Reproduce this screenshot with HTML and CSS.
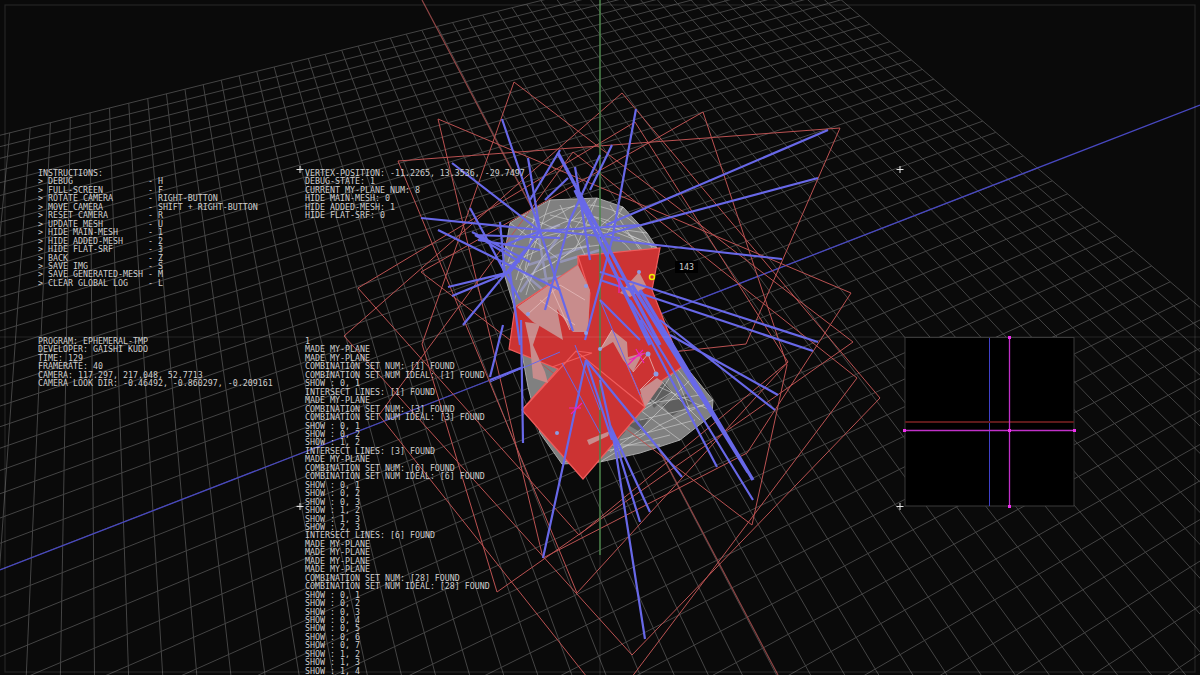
FILE: index.html
```html
<!DOCTYPE html>
<html>
<head>
  <title>EPHEMERAL-TMP</title>
  <link rel="stylesheet" href="styles.css">
</head>
<body>
  <div class="stage">
    <svg class="scene" width="1200" height="675" viewBox="0 0 1200 675">
      <!-- ground grid is filled in by script.js -->
      <g id="grid" class="grid"></g>

      <!-- axes -->
      <line class="axis-red" x1="422" y1="0" x2="778" y2="675"/>
      <line class="axis-blue" x1="0" y1="570" x2="1200" y2="105"/>

      <!-- mesh -->
      <path class="mesh" d="M502,267 510,223 523,215 550,200 597,198 623,207 647,233 657,248 650,290 668,345 690,372 713,400 712,415 680,440 640,453 600,462 562,464 540,433 528,387 513,303Z"/>
      <path class="mesh-dark" d="M648,398 665,382 672,392 654,408ZM662,405 686,394 694,402 672,416ZM628,425 650,416 640,432ZM604,440 626,431 612,447Z"/>
      <path class="mesh-pale" d="M515,240 560,225M510,262 555,300M520,292 560,235M535,215 548,290M560,262 600,250M528,265 590,245M540,280 600,270"/>
      <path class="mesh-wire" d="M510,223 560,260 623,207M523,215 570,235 597,198M550,200 530,260 513,303M597,198 575,250 540,270M623,207 600,245 560,250M647,233 590,225 530,240M657,248 610,230 550,215M502,267 550,245 590,200M580,205 610,250M560,205 585,255M535,212 525,270M540,225 575,205M505,245 535,290M520,280 555,262M610,205 640,250M590,215 640,240M628,235 655,245
        M508,262 Q520,208 590,205 Q635,210 652,248M516,280 Q530,222 592,216 Q625,222 642,250M526,295 Q540,235 595,230 Q620,235 632,252
        M672,392 640,412 600,440 562,464M713,400 660,425 600,462M690,380 640,430 610,452M700,395 640,405 590,450M680,362 655,400 620,420M665,350 690,410M655,385 710,410M640,410 680,440M600,445 660,445M548,440 590,462M535,420 570,455M675,370 640,385M640,420 705,405M620,440 695,420M590,455 670,435M655,375 700,420M670,360 712,412M645,395 690,430"/>

      <!-- planes -->
      <g class="planes">
        <polygon points="438,119 851,293 747,453 543,558"/>
        <polygon points="514,82 853,342 497,592 422,344"/>
        <polygon points="344,336 622,93 880,398 632,655"/>
        <polygon points="379,415 573,152 857,378 610,706"/>
        <polygon points="358,288 635,122 788,362 579,535"/>
        <polygon points="421,272 703,112 787,365 752,525"/>
        <polyline points="672,352 746,344 840,128 398,161 577,593 788,362"/>
      </g>

      <!-- flat surfaces -->
      <polygon class="flat" points="515,307 578,265 578,256 660,248 652,290 682,367 640,395 645,407 583,479 522,410 558,369 509,349"/>
      <path class="flat-edge" d="M522,410 576,351 645,407M576,351 592,353 552,367M578,256 590,293 587,330M612,330 640,395"/>
      <g class="pink">
        <polygon points="517,307 578,265 590,290 588,332 573,332 557,309 563,340 533,322"/>
        <polygon points="525,322 540,324 533,345 545,372 548,383 533,378 530,345"/>
        <polygon points="612,330 627,342 628,357 643,353 633,372 623,360 613,342 600,350"/>
        <polygon points="657,378 640,390 645,407 663,382"/>
        <polygon points="639,272 647,287 630,297 620,293"/>
        <polygon points="587,440 610,431 608,436 589,445"/>
      </g>
      <path class="pink-wire" d="M528,314 560,285 585,300M540,300 575,325M550,285 570,330M612,330 600,350M648,354 656,374M656,374 640,390M633,372 648,354"/>

      <!-- axis over the mesh -->
      <line class="axis-green" x1="600" y1="0" x2="600" y2="555"/>

      <!-- my-plane normals -->
      <g class="normals">
        <path d="M502,119 540,231M452,163 540,231M528,158 540,231M421,218 620,238M540,231 573,331M540,231 640,225M540,231 510,272M540,231 505,245"/>
        <path d="M448,287 510,272M452,296 510,272M463,325 525,250M470,208 520,300M438,230 560,290M475,235 560,238M475,235 520,262M510,272 530,245M510,272 520,345M500,222 505,275M478,240 540,250M472,232 530,262"/>
        <path d="M575,167 580,198 590,260M636,109 612,240 585,340M612,145 590,190M530,200 560,150M545,200 568,178M600,155 570,220 545,310"/>
        <path d="M828,130 606,225M818,178 604,235M782,259 612,240M818,342 600,272M813,351 600,280"/>
        <path d="M753,500 630,300M717,467 640,320M682,477 586,360M775,410 660,320M778,395 670,335M640,340 600,300"/>
        <path d="M645,639 615,447 600,380M640,522 612,430M650,512 610,425M543,558 586,360M523,443 521,320M490,377 503,325M490,380 523,367M586,360 612,440"/>
        <path class="thick" d="M558,153 660,345M753,480 640,290M748,472 632,285M575,190 650,345"/>
        <path class="thin" d="M562,363 600,433M600,300 640,395M490,382 560,352M575,345 600,410"/>
      </g>

      <!-- dots and markers -->
      <g class="dots">
        <circle cx="648" cy="354" r="2.5"/>
        <circle cx="656" cy="374" r="2.5"/>
        <circle cx="557" cy="433" r="2"/>
        <circle cx="586" cy="333" r="2"/>
        <circle cx="600" cy="349" r="2"/>
        <circle cx="528" cy="314" r="2"/>
        <circle cx="586" cy="286" r="2"/>
        <circle cx="639" cy="272" r="2"/>
      </g>
      <path class="magenta" d="M569,408 581,408M571,414 582,403M629,360 645,353M628,365 643,350M636,349 644,363M619,278 619,293"/>
      <circle class="marker" cx="652" cy="277" r="2.5"/>

      <!-- screen frame and centre lines -->
      <g class="frame">
        <rect x="5" y="5" width="1190" height="667"/>
        <line x1="0" y1="337" x2="1200" y2="337"/>
        <line x1="600" y1="0" x2="600" y2="675"/>
      </g>

      <!-- inset view -->
      <rect class="inset" x="905" y="337.5" width="169" height="168.5"/>
      <line class="inset-blue" x1="989.5" y1="338" x2="989.5" y2="506"/>
      <line class="inset-red" x1="905" y1="422" x2="1074" y2="422"/>
      <line class="inset-magenta" x1="1009.5" y1="338" x2="1009.5" y2="506"/>
      <line class="inset-magenta" x1="905" y1="430.5" x2="1074" y2="430.5"/>
      <path class="inset-dots" d="M1008,336h3v3h-3zM1008,505h3v3h-3zM903,429h3v3h-3zM1073,429h3v3h-3zM1008,429h3v3h-3z"/>

      <!-- corner crosses -->
      <path class="cross" d="M296.500,169.500h7M300,166v7M896.500,169.500h7M900,166v7M296.500,506.500h7M300,503v7M896.500,506.500h7M900,503v7"/>
    </svg>

    <pre class="hud hud-keys">INSTRUCTIONS:
&gt; DEBUG               - H
&gt; FULL-SCREEN         - F
&gt; ROTATE CAMERA       - RIGHT-BUTTON
&gt; MOVE CAMERA         - SHIFT + RIGHT-BUTTON
&gt; RESET CAMERA        - R
&gt; UPDATE MESH         - U
&gt; HIDE MAIN-MESH      - 1
&gt; HIDE ADDED-MESH     - 2
&gt; HIDE FLAT-SRF       - 3
&gt; BACK                - Z
&gt; SAVE IMG            - S
&gt; SAVE GENERATED-MESH - M
&gt; CLEAR GLOBAL LOG    - L</pre>

    <pre class="hud hud-program">PROGRAM: EPHEMERAL-TMP
DEVELOPER: GAISHI KUDO
TIME: 129
FRAMERATE: 40
CAMERA: 117.297, 217.048, 52.7713
CAMERA LOOK DIR: -0.46492, -0.860297, -0.209161</pre>

    <pre class="hud hud-state">VERTEX-POSITION: -11.2265, 13.3536, -29.7497
DEBUG-STATE: 1
CURRENT MY-PLANE NUM: 8
HIDE MAIN-MESH: 0
HIDE ADDED-MESH: 1
HIDE FLAT-SRF: 0</pre>

    <pre class="hud hud-log">1
MADE MY-PLANE
MADE MY-PLANE
COMBINATION SET NUM: [1] FOUND
COMBINATION SET NUM IDEAL: [1] FOUND
SHOW : 0, 1
INTERSECT LINES: [1] FOUND
MADE MY-PLANE
COMBINATION SET NUM: [3] FOUND
COMBINATION SET NUM IDEAL: [3] FOUND
SHOW : 0, 1
SHOW : 0, 2
SHOW : 1, 2
INTERSECT LINES: [3] FOUND
MADE MY-PLANE
COMBINATION SET NUM: [6] FOUND
COMBINATION SET NUM IDEAL: [6] FOUND
SHOW : 0, 1
SHOW : 0, 2
SHOW : 0, 3
SHOW : 1, 2
SHOW : 1, 3
SHOW : 2, 3
INTERSECT LINES: [6] FOUND
MADE MY-PLANE
MADE MY-PLANE
MADE MY-PLANE
MADE MY-PLANE
COMBINATION SET NUM: [28] FOUND
COMBINATION SET NUM IDEAL: [28] FOUND
SHOW : 0, 1
SHOW : 0, 2
SHOW : 0, 3
SHOW : 0, 4
SHOW : 0, 5
SHOW : 0, 6
SHOW : 0, 7
SHOW : 1, 2
SHOW : 1, 3
SHOW : 1, 4</pre>

    <div class="hud tag">143</div>
  </div>

  <script src="script.js"></script>
</body>
</html>
```

FILE: styles.css
```css
body {
  margin: 0;
  background-color: #0a0a0a;
}

.stage {
  position: relative;
  width: 1200px;
  height: 675px;
  overflow: hidden;
  background-color: #0a0a0a;
}

.scene {
  display: block;
}

.scene line,
.scene path,
.scene polyline {
  fill: none;
}

.grid line {
  stroke: #444444;
  stroke-width: 1;
}

.axis-red {
  stroke: #8f4545;
  stroke-width: 1.2;
}

.axis-blue {
  stroke: #4848c0;
  stroke-width: 1.3;
}

.axis-green {
  stroke: #3c7a3c;
  stroke-width: 1.5;
}

.scene .mesh {
  fill: #808080;
  stroke: #a8a8a8;
  stroke-width: 1;
}

.scene .mesh-dark {
  fill: #5e5e5e;
}

.mesh-pale {
  stroke: #a4a4d8;
  stroke-width: 2.5;
  opacity: 0.6;
}

.mesh-wire {
  stroke: #d4d4d4;
  stroke-width: 1;
  opacity: 0.6;
}

.planes polygon,
.planes polyline {
  fill: none;
  stroke: #bb5252;
  stroke-width: 1;
}

.flat {
  fill: #cc3333;
  stroke: #f05c5c;
  stroke-width: 1.2;
}

.flat-edge {
  stroke: #f05c5c;
  stroke-width: 1.2;
}

.pink polygon {
  fill: #c88c8c;
}

.pink-wire {
  stroke: #e4baba;
  stroke-width: 0.8;
}

.normals path {
  stroke: #6868e8;
  stroke-width: 2.2;
}

.normals .thick {
  stroke-width: 3.4;
}

.normals .thin {
  stroke-width: 1;
}

.dots circle {
  fill: #8c9ce4;
}

.magenta {
  stroke: #ee22bb;
  stroke-width: 1.2;
}

.scene .marker {
  fill: none;
  stroke: #eeee00;
  stroke-width: 1.5;
}

.frame rect,
.frame line {
  fill: none;
  stroke: #ffffff;
  stroke-opacity: 0.11;
  stroke-width: 1.2;
}

.inset {
  fill: #000000;
  stroke: #3a3a3a;
  stroke-width: 1;
}

.inset-blue {
  stroke: #4040c8;
  stroke-width: 1;
}

.inset-red {
  stroke: #5e1a1a;
  stroke-width: 2;
}

.inset-magenta {
  stroke: #c030c8;
  stroke-width: 1.3;
}

.scene .inset-dots {
  fill: #ee30ee;
}

.cross {
  stroke: #e8e8e8;
  stroke-width: 1;
}

.hud {
  position: absolute;
  margin: 0;
  font-family: "DejaVu Sans Mono", "Liberation Mono", monospace;
  font-size: 8.3px;
  line-height: 8.45px;
  color: #cfcfcf;
}

.hud-keys {
  left: 38px;
  top: 169px;
}

.hud-program {
  left: 38px;
  top: 337px;
}

.hud-state {
  left: 305px;
  top: 169px;
}

.hud-log {
  left: 305px;
  top: 337px;
}

.tag {
  left: 675px;
  top: 261px;
  padding: 2px 4px;
  background-color: #000000;
}
```

FILE: script.js
```js
// ground grid, projected from the camera shown in the hud
var cam = [117.297, 217.048, 52.7713];
var d = [-0.46492, -0.860297, -0.209161];
var focal = 584.6;
var half = 250;
var step = 10;

var rLen = Math.sqrt(d[2] * d[2] + d[0] * d[0]);
var r = [-d[2] / rLen, 0, d[0] / rLen];
var u = [
  r[1] * d[2] - r[2] * d[1],
  r[2] * d[0] - r[0] * d[2],
  r[0] * d[1] - r[1] * d[0]
];

function dot(a, b) {
  return a[0] * b[0] + a[1] * b[1] + a[2] * b[2];
}

function project(x, z) {
  var p = [x, 0, z];
  var rel = [x - cam[0], -cam[1], z - cam[2]];
  var depth = dot(d, rel);
  return [600 + focal * dot(r, p) / depth, 337.5 - focal * dot(u, p) / depth];
}

var grid = document.getElementById("grid");

function addLine(a, b) {
  var line = document.createElementNS("http://www.w3.org/2000/svg", "line");
  line.setAttribute("x1", a[0]);
  line.setAttribute("y1", a[1]);
  line.setAttribute("x2", b[0]);
  line.setAttribute("y2", b[1]);
  grid.appendChild(line);
}

for (var i = -half; i <= half; i += step) {
  addLine(project(i, -half), project(i, half));
  addLine(project(-half, i), project(half, i));
}
```
